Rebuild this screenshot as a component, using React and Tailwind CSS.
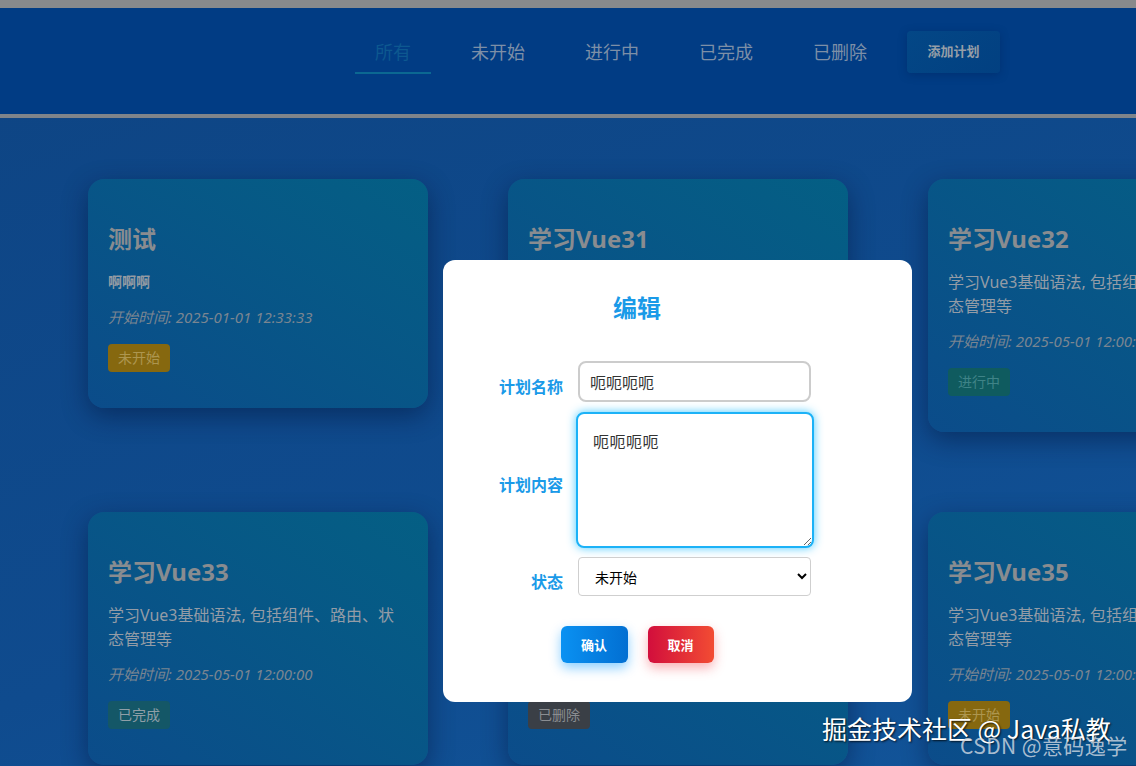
import React from "react";

const cards = [
  { title: "测试", desc: "啊啊啊", small: true, time: "2025-01-01 12:33:33", status: "未开始" },
  { title: "学习Vue31", desc: "学习Vue3基础语法, 包括组件、路由、状态管理等", time: "2025-05-01 12:00:00", status: "已完成" },
  { title: "学习Vue32", desc: "学习Vue3基础语法, 包括组件、路由、状态管理等", time: "2025-05-01 12:00:00", status: "进行中" },
  { title: "学习Vue33", desc: "学习Vue3基础语法, 包括组件、路由、状态管理等", time: "2025-05-01 12:00:00", status: "已完成" },
  { title: "学习Vue34", desc: "学习Vue3基础语法, 包括组件、路由、状态管理等", time: "2025-05-01 12:00:00", status: "已删除" },
  { title: "学习Vue35", desc: "学习Vue3基础语法, 包括组件、路由、状态管理等", time: "2025-05-01 12:00:00", status: "未开始" },
];

const badgeClass = {
  未开始: "bg-[#86680f] text-[#ad964f]",
  进行中: "bg-[#0f5b5f] text-[#3f8387]",
  已完成: "bg-[#145767] text-[#8f9fa7]",
  已删除: "bg-[#3a3f46] text-[#8a8d91]",
};

function Card({ c }) {
  return (
    <div className="rounded-2xl bg-[linear-gradient(to_top_right,#0b4c8a,#045f84)] shadow-[0_8px_26px_rgba(0,15,50,0.45)] px-5 pt-[45px] pb-[36px]">
      <h3 className="text-[24px] leading-[30px] font-bold text-[#898c90]">{c.title}</h3>
      {c.small ? (
        <p className="mt-4 text-[14px] leading-6 font-bold text-[#959ba3]">{c.desc}</p>
      ) : (
        <p className="mt-4 text-[16px] leading-6 text-[#949ca6]">{c.desc}</p>
      )}
      <p className="mt-[13px] text-[15px] leading-5 italic text-[#7a8591]">开始时间: {c.time}</p>
      <div className="mt-[17px] flex">
        <span className={"h-7 px-2.5 rounded-[4px] text-[14px] leading-7 " + badgeClass[c.status]}>{c.status}</span>
      </div>
    </div>
  );
}

const navs = ["所有", "未开始", "进行中", "已完成", "已删除"];

export default function App() {
  return (
    <div
      className="relative h-[766px] w-full overflow-hidden bg-[linear-gradient(160deg,#0e4483,#0f4b8e_60%,#12559a)]"
      style={{ fontFamily: '"Noto Sans", "Noto Sans CJK SC", sans-serif' }}
    >
      <header className="h-[118px] border-t-[8px] border-t-[#888a8c] border-b-[4px] border-b-[#7f848a] bg-[#013c84] flex items-start gap-5 pt-[23px] pl-[355px]">
        {navs.map((n, i) => (
          <div
            key={n}
            className={
              "px-5 pt-2 pb-[7px] text-[18px] leading-[26px] border-b-2 " +
              (i === 0 ? "text-[#0d5890] border-[#0b6892]" : "text-[#7d8fa7] border-transparent")
            }
          >
            {n}
          </div>
        ))}
        <div className="w-[93px] h-[42px] rounded-[4px] bg-[linear-gradient(135deg,#034786,#024081)] shadow-[0_2px_8px_rgba(0,30,80,0.35)] flex items-center justify-center text-[13px] font-bold text-[#969ea7]">
          添加计划
        </div>
      </header>

      <main className="pt-[61px] pl-[88px]">
        <div className="grid grid-cols-[340px_340px_340px] gap-x-20 gap-y-20 items-start">
          {cards.map((c) => (
            <Card key={c.title} c={c} />
          ))}
        </div>
      </main>

      {/* modal */}
      <div className="absolute inset-0">
        <div className="absolute left-[443px] top-[260px] w-[469px] rounded-xl bg-white px-5 pt-5 pb-[39px]">
          <div className="w-[348px]" style={{ fontFamily: '"Noto Sans CJK SC", "Noto Sans", sans-serif' }}>
            <h2 className="mt-3 text-center text-[24px] leading-[30px] font-bold text-[#1a9ae8]">编辑</h2>
            <div className="mt-[39px] flex items-center">
              <label className="w-[115px] shrink-0 pr-[15px] pt-2 text-right text-[16px] font-bold text-[#1a9ae8]">计划名称</label>
              <input
                readOnly
                value="呃呃呃呃"
                className="w-[233px] h-[41px] rounded-lg border-2 border-[#cccccc] bg-white px-[10px] text-[16px] text-[#333]"
              />
            </div>
            <div className="mt-[10px] flex items-center">
              <label className="w-[115px] shrink-0 pr-[15px] pt-2 text-right text-[16px] font-bold text-[#1a9ae8]">计划内容</label>
              <textarea
                readOnly
                value="呃呃呃呃"
                className="-ml-[2px] w-[238px] shrink-0 h-[136px] rounded-lg border-2 border-[#1cb2f7] bg-white px-[15px] py-[15px] text-[16px] leading-6 tracking-[0.5px] text-[#333] shadow-[0_0_10px_rgba(30,190,255,0.8)] outline-none"
              />
            </div>
            <div className="mt-[9px] flex items-center">
              <label className="w-[115px] shrink-0 pr-[15px] pt-2 text-right text-[16px] font-bold text-[#1a9ae8]">状态</label>
              <select
                defaultValue="未开始"
                className="w-[233px] h-[39px] rounded-[4px] border border-[#cfcfcf] bg-white pl-[12px] pr-[6px] text-[14px] text-black"
              >
                <option>未开始</option>
                <option>进行中</option>
                <option>已完成</option>
                <option>已删除</option>
              </select>
            </div>
            <div className="mt-[30px] flex justify-center gap-5">
              <button className="w-[67px] h-[37px] rounded-md bg-[linear-gradient(to_right,#0a91f2,#026fd2)] text-[13px] font-bold text-white shadow-[0_5px_12px_rgba(0,150,255,0.45)]">
                确认
              </button>
              <button className="w-[66px] h-[37px] rounded-md bg-[linear-gradient(to_right,#d20e3c,#f24c33)] text-[13px] font-bold text-white shadow-[0_5px_12px_rgba(240,60,70,0.4)]">
                取消
              </button>
            </div>
          </div>
        </div>
      </div>

      {/* watermarks */}
      <div
        className="absolute left-[822px] top-[711px] text-[25px] leading-[34px] text-white whitespace-nowrap [text-shadow:1px_1px_2px_rgba(0,0,0,0.8)]"
        style={{ fontFamily: '"Noto Sans CJK SC", sans-serif' }}
      >
        掘金技术社区 @ Java私教
      </div>
      <div
        className="absolute left-[960px] top-[731px] text-[21px] leading-[28px] tracking-[0.4px] text-[#d4dbe3]/80 whitespace-nowrap"
        style={{ fontFamily: '"Noto Sans CJK SC", sans-serif' }}
      >
        CSDN @意码逸学
      </div>
    </div>
  );
}
